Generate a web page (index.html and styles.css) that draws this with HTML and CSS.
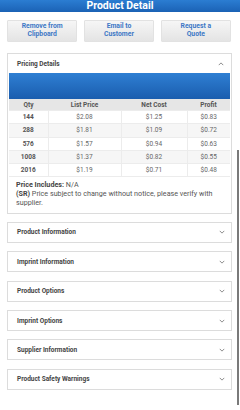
FILE: index.html
```html
<!DOCTYPE html>
<html lang="en">
<head>
    <meta charset="UTF-8">
    <meta name="viewport" content="width=device-width, initial-scale=1.0">
    <title>Product Detail</title>
    <link rel="stylesheet" href="styles.css">
</head>
<body>
    <div class="topbar">Product Detail</div>

    <div class="actions">
        <button class="action-btn">Remove from<br>Clipboard</button>
        <button class="action-btn">Email to<br>Customer</button>
        <button class="action-btn">Request a<br>Quote</button>
    </div>

    <div class="card pricing">
        <div class="card-head">
            <span>Pricing Details</span>
            <svg class="chev" viewBox="0 0 8 5" width="6" height="4"><path d="M1 4 L4 1 L7 4" fill="none" stroke="#8a8a8a" stroke-width="1.3"/></svg>
        </div>
        <div class="blue-band"></div>
        <table class="price-table">
            <thead>
                <tr><th>Qty</th><th>List Price</th><th>Net Cost</th><th>Profit</th></tr>
            </thead>
            <tbody>
                <tr><td class="qty">144</td><td>$2.08</td><td>$1.25</td><td>$0.83</td></tr>
                <tr class="alt"><td class="qty">288</td><td>$1.81</td><td>$1.09</td><td>$0.72</td></tr>
                <tr><td class="qty">576</td><td>$1.57</td><td>$0.94</td><td>$0.63</td></tr>
                <tr class="alt"><td class="qty">1008</td><td>$1.37</td><td>$0.82</td><td>$0.55</td></tr>
                <tr><td class="qty">2016</td><td>$1.19</td><td>$0.71</td><td>$0.48</td></tr>
            </tbody>
        </table>
        <div class="price-notes">
            <p><b>Price Includes:</b> N/A</p>
            <p><b>(SR)</b> Price subject to change without notice, please verify with supplier.</p>
        </div>
    </div>

    <div class="card section">
        <span>Product Information</span>
        <svg class="chev" viewBox="0 0 8 5" width="6" height="4"><path d="M1 1 L4 4 L7 1" fill="none" stroke="#8a8a8a" stroke-width="1.3"/></svg>
    </div>
    <div class="card section">
        <span>Imprint Information</span>
        <svg class="chev" viewBox="0 0 8 5" width="6" height="4"><path d="M1 1 L4 4 L7 1" fill="none" stroke="#8a8a8a" stroke-width="1.3"/></svg>
    </div>
    <div class="card section">
        <span>Product Options</span>
        <svg class="chev" viewBox="0 0 8 5" width="6" height="4"><path d="M1 1 L4 4 L7 1" fill="none" stroke="#8a8a8a" stroke-width="1.3"/></svg>
    </div>
    <div class="card section">
        <span>Imprint Options</span>
        <svg class="chev" viewBox="0 0 8 5" width="6" height="4"><path d="M1 1 L4 4 L7 1" fill="none" stroke="#8a8a8a" stroke-width="1.3"/></svg>
    </div>
    <div class="card section">
        <span>Supplier Information</span>
        <svg class="chev" viewBox="0 0 8 5" width="6" height="4"><path d="M1 1 L4 4 L7 1" fill="none" stroke="#8a8a8a" stroke-width="1.3"/></svg>
    </div>
    <div class="card section">
        <span>Product Safety Warnings</span>
        <svg class="chev" viewBox="0 0 8 5" width="6" height="4"><path d="M1 1 L4 4 L7 1" fill="none" stroke="#8a8a8a" stroke-width="1.3"/></svg>
    </div>

    <div class="scrollbar"></div>
</body>
</html>
```

FILE: styles.css
```css
body {
    margin: 0;
    font-family: Roboto, "Liberation Sans", sans-serif;
    background: #fff;
    color: #444;
}
.topbar {
    height: 12px;
    line-height: 12px;
    background: linear-gradient(#2b7dd2, #1b62b5);
    color: #fff;
    font-weight: bold;
    font-size: 10.5px;
    text-align: center;
    overflow: hidden;
}
.actions {
    display: flex;
    gap: 6.5px;
    padding: 8px 9px 0 7px;
}
.action-btn {
    flex: 1;
    height: 22px;
    padding: 0;
    border: 1px solid #e2e2e2;
    border-radius: 1px;
    background: linear-gradient(#f6f6f6, #e4e4e4);
    color: #3d78c6;
    font-family: inherit;
    font-weight: bold;
    font-size: 6.8px;
    line-height: 7.6px;
}
.card {
    margin: 0 8px 0 7px;
    border: 1px solid #dcdcdc;
    background: #fff;
}
.pricing {
    margin-top: 11px;
    padding: 0 1px 1px;
}
.card-head {
    height: 19px;
    display: flex;
    align-items: center;
    justify-content: space-between;
    padding: 0 6px 0 8px;
    font-size: 6.5px;
    font-weight: bold;
    color: #444;
}
.blue-band {
    height: 26px;
    background: linear-gradient(#2f7fd3, #1a5dae);
}
.price-table {
    width: 100%;
    border-collapse: collapse;
    font-size: 6.5px;
    text-align: center;
}
.price-table th {
    height: 11px;
    padding: 0;
    background: #e6e6e6;
    color: #555;
    font-weight: bold;
}
.price-table th:nth-child(1) { width: 39px; }
.price-table th:nth-child(2) { width: 73px; }
.price-table th:nth-child(3) { width: 66px; }
.price-table td {
    height: 12.3px;
    padding: 0;
    border: 1px solid #ececec;
    color: #666;
}
.price-table tr td:first-child { border-left: none; }
.price-table tr td:last-child { border-right: none; }
.price-table td.qty {
    font-weight: bold;
    color: #555;
}
.price-table tr.alt td {
    background: #f6f6f6;
}
.price-notes {
    padding: 4px 7px 4px;
    font-size: 7.2px;
    line-height: 8.8px;
    color: #555;
}
.price-notes p {
    margin: 0;
}
.price-notes b {
    color: #444;
}
.section {
    height: 21px;
    box-sizing: border-box;
    margin-top: 8.4px;
    display: flex;
    align-items: center;
    justify-content: space-between;
    padding: 0 6px 0 9px;
    font-size: 6.5px;
    font-weight: bold;
    color: #444;
}
.pricing + .section {
    margin-top: 8px;
}
.scrollbar {
    position: absolute;
    left: 237px;
    top: 150px;
    width: 2px;
    height: 255px;
    background: #7a7a7a;
}
```
